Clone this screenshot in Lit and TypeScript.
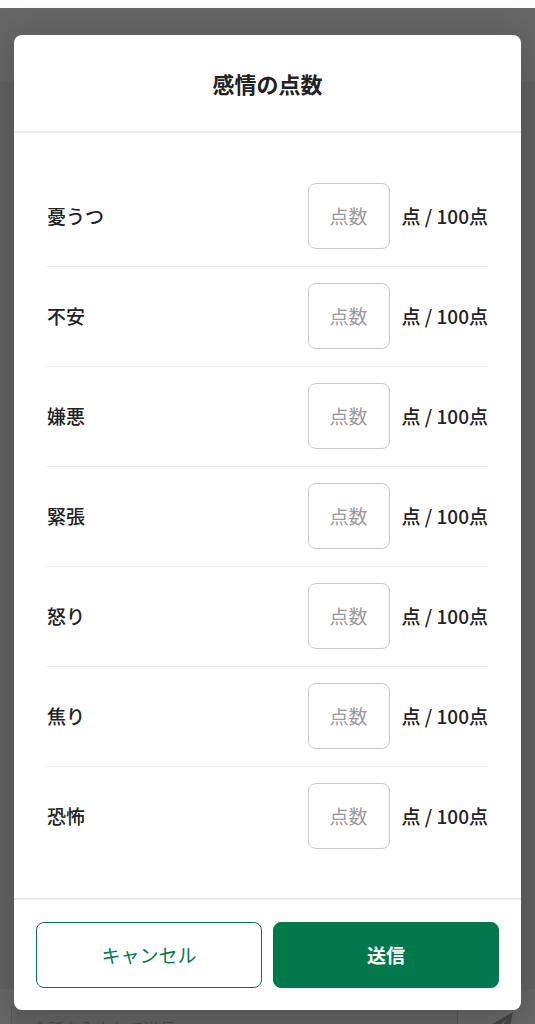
import { css, html, LitElement } from "lit";
import { customElement, state } from "lit/decorators.js";

const EMOTIONS = ['憂うつ', '不安', '嫌悪', '緊張', '怒り', '焦り', '恐怖'];

@customElement('score-row')
export class ScoreRow extends LitElement {
  static properties = {
    label: { type: String },
  };

  declare label: string;

  render() {
    return html`
      <div class="row">
        <label class="name" for="score">${this.label}</label>
        <input class="score" id="score" type="text" inputmode="numeric" placeholder="点数">
        <span class="unit">点 / 100点</span>
      </div>
    `
  }

  static styles = css`
    :host {
      display: block;
      border-bottom: 1px solid #ebebeb;
    }

    :host(:last-of-type) {
      border-bottom: none;
    }

    .row {
      display: flex;
      align-items: center;
      padding: 16px 0 17px;
    }

    .name {
      flex: 1;
    }

    .score {
      box-sizing: border-box;
      width: 82px;
      height: 66px;
      margin: 0 12px 0 0;
      padding: 0 0 2px;
      border: 1px solid #c8c8c8;
      border-radius: 8px;
      background: #fff;
      color: #222;
      font: inherit;
      font-weight: 400;
      text-align: center;
    }

    .score::placeholder {
      color: #999;
      opacity: 1;
    }
  `
}

@customElement('app-root')
export class AppRoot extends LitElement {
  @state()
  open = true;

  close() {
    this.open = false;
  }

  renderDialog() {
    return html`
      <div class="overlay">
        <form class="dialog" role="dialog" aria-labelledby="title" @submit=${(e: Event) => e.preventDefault()}>
          <header class="dialog-header">
            <h1 class="title" id="title">感情の点数</h1>
          </header>
          <div class="dialog-body">
            ${EMOTIONS.map(name => html`<score-row .label=${name}></score-row>`)}
          </div>
          <footer class="dialog-footer">
            <button class="button" type="button" @click=${this.close}>キャンセル</button>
            <button class="button primary" type="submit">送信</button>
          </footer>
        </form>
      </div>
    `
  }

  render() {
    return html`
      <div class="page">
        <div class="app">
          <div class="topbar"></div>
          <div class="talk"></div>
          <div class="composer">
            <input class="message" type="text" aria-label="メッセージ" placeholder="会話を入力して送信">
            <button class="send" type="button" aria-label="送信">
              <svg width="34" height="34" viewBox="0 0 34 34">
                <path d="M33 1 2 19l8 4L28 7 14 25v9l5-7 8 4z" fill="#aaa" />
              </svg>
            </button>
          </div>
        </div>
        ${this.open ? this.renderDialog() : ''}
      </div>
    `
  }

  static styles = css`
    :host {
      display: block;
      font-family: "Noto Sans CJK JP", "Noto Sans", sans-serif;
      font-size: 19px;
      font-weight: 500;
      line-height: 28px;
      color: #222;
    }

    .page {
      box-sizing: border-box;
      display: grid;
      min-height: 100vh;
      padding-top: 8px;
      background: #fcfcfd;
    }

    .app, .overlay {
      grid-area: 1 / 1;
    }

    .app {
      display: flex;
      flex-direction: column;
      background: #f2f2f2;
    }

    .topbar {
      height: 74px;
      background: #fff;
    }

    .talk {
      flex: 1;
    }

    .composer {
      display: flex;
      align-items: flex-start;
      flex: none;
      height: 35px;
      background: #fff;
      overflow: hidden;
    }

    .message {
      box-sizing: border-box;
      flex: 1;
      height: 56px;
      margin: 11px 0 0 11px;
      padding: 0 20px;
      border: 1px solid #ddd;
      border-radius: 8px 0 0 8px;
      background: #f2f2f2;
      font: inherit;
      font-size: 16px;
      font-weight: 400;
    }

    .message::placeholder {
      color: #bbb;
      opacity: 1;
    }

    .send {
      display: flex;
      align-items: center;
      justify-content: center;
      width: 77px;
      height: 56px;
      margin: 11px 0 0;
      padding: 0;
      border: none;
      background: none;
    }

    .overlay {
      z-index: 1;
      padding: 27px 14px 14px;
      background: rgba(0, 0, 0, 0.6);
    }

    .dialog {
      border-radius: 8px;
      background: #fff;
      box-shadow: 0 4px 36px rgba(0, 0, 0, 0.2);
    }

    .dialog-header {
      padding: 33px 22px;
      border-bottom: 2px solid #ebebeb;
    }

    .title {
      margin: 0;
      font-size: 22px;
      font-weight: 700;
      line-height: 30px;
      text-align: center;
    }

    .dialog-body {
      padding: 34px 33px 32px;
    }

    .dialog-footer {
      display: flex;
      gap: 11px;
      padding: 22px;
      border-top: 2px solid #ebebeb;
    }

    .button {
      box-sizing: border-box;
      flex: 1;
      height: 66px;
      padding: 0;
      border: 1px solid #00784b;
      border-radius: 8px;
      background: #fff;
      color: #00784b;
      font: inherit;
      font-weight: 400;
      cursor: pointer;
    }

    .primary {
      background: #00784b;
      color: #fff;
      font-weight: 700;
    }
  `
}
